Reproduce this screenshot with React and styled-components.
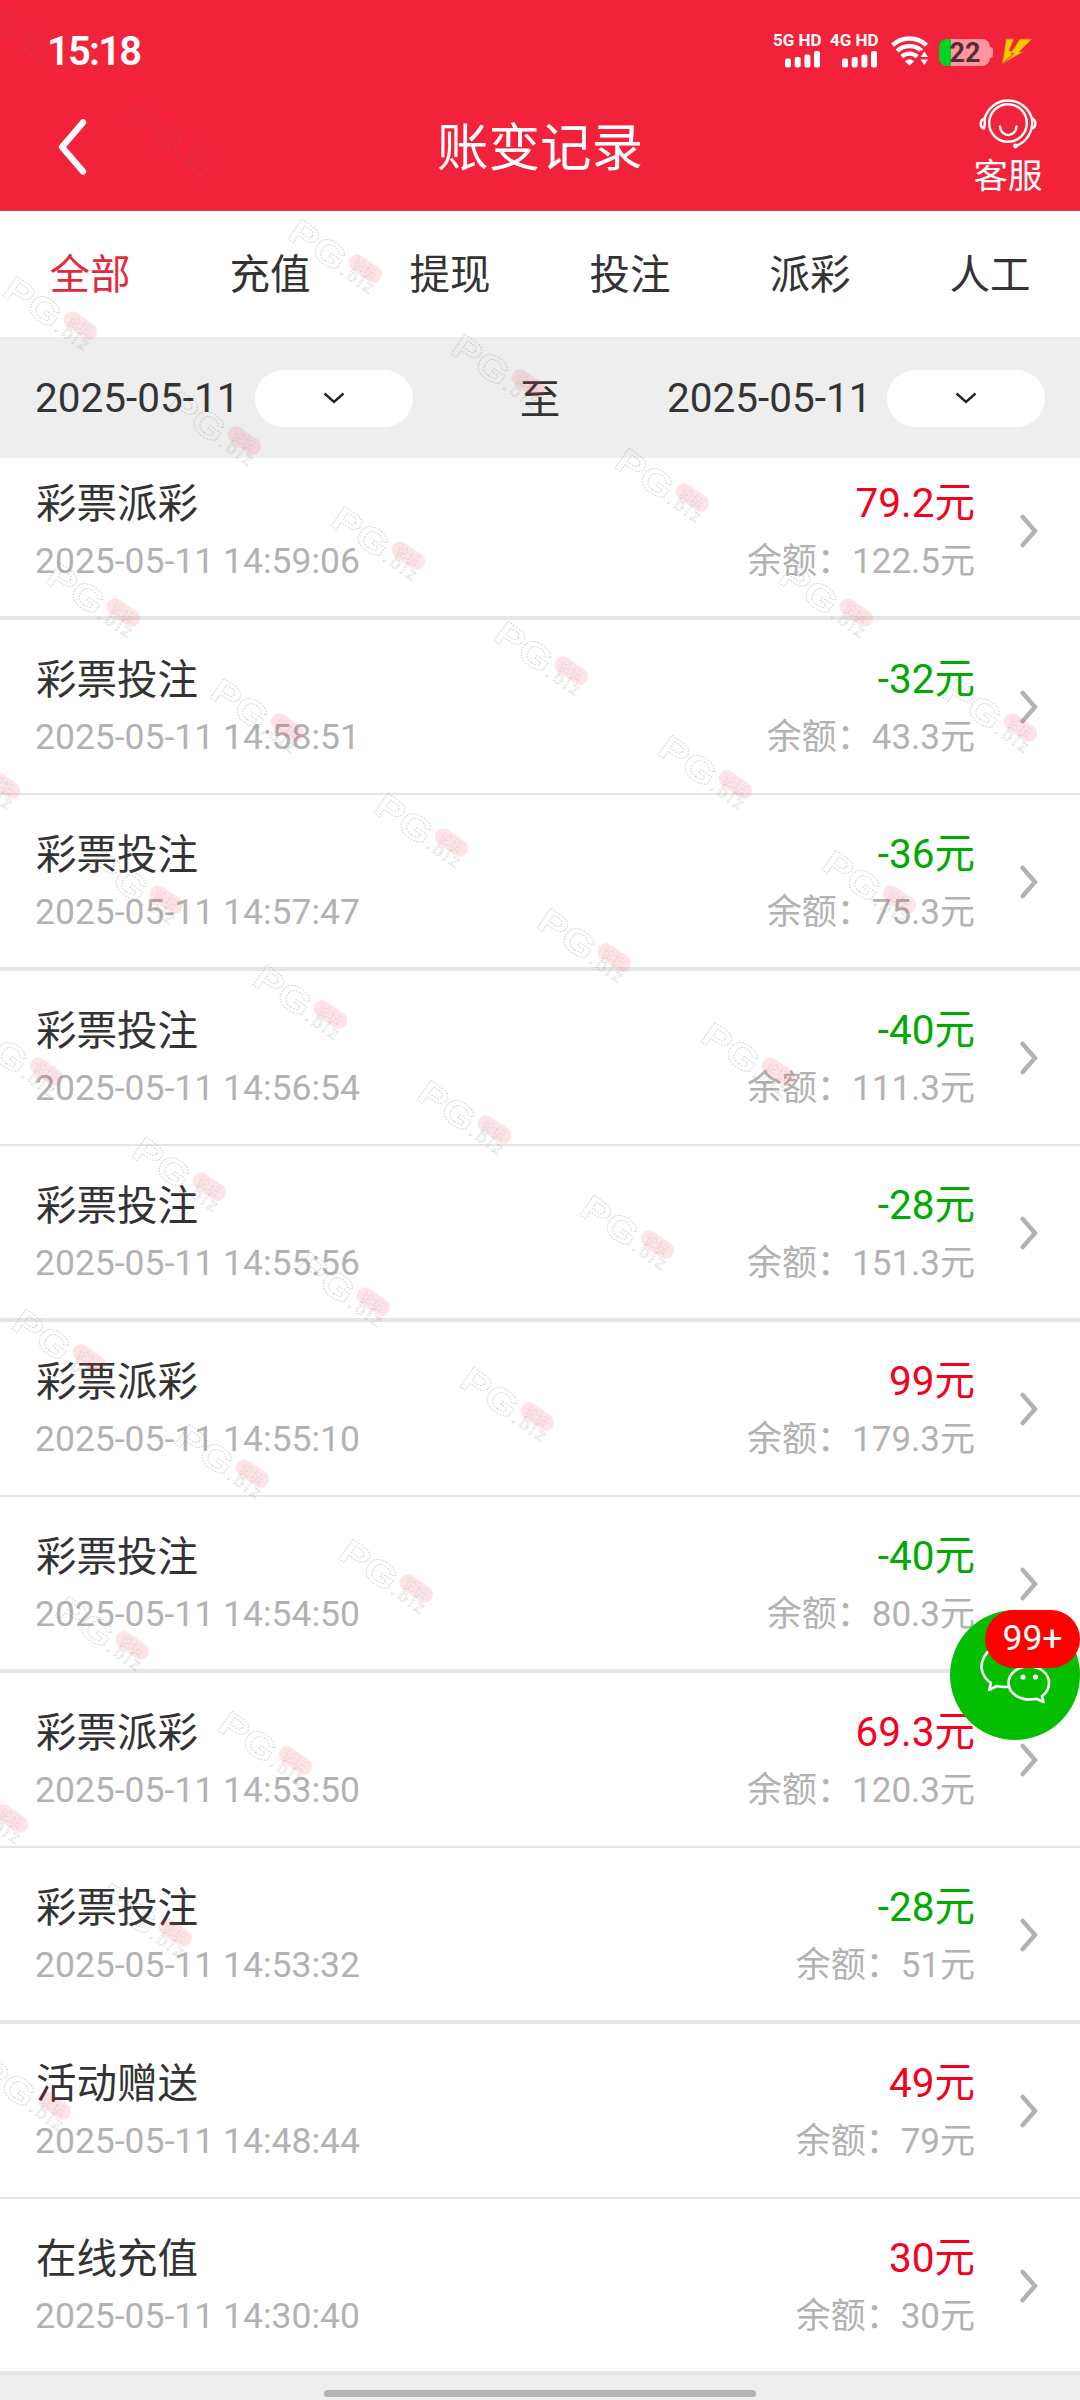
import styled, { createGlobalStyle } from "styled-components";

const tabs = ["全部", "充值", "提现", "投注", "派彩", "人工"];

const records = [
  { type: "彩票派彩", time: "2025-05-11 14:59:06", amount: "79.2", balance: "122.5" },
  { type: "彩票投注", time: "2025-05-11 14:58:51", amount: "-32", balance: "43.3" },
  { type: "彩票投注", time: "2025-05-11 14:57:47", amount: "-36", balance: "75.3" },
  { type: "彩票投注", time: "2025-05-11 14:56:54", amount: "-40", balance: "111.3" },
  { type: "彩票投注", time: "2025-05-11 14:55:56", amount: "-28", balance: "151.3" },
  { type: "彩票派彩", time: "2025-05-11 14:55:10", amount: "99", balance: "179.3" },
  { type: "彩票投注", time: "2025-05-11 14:54:50", amount: "-40", balance: "80.3" },
  { type: "彩票派彩", time: "2025-05-11 14:53:50", amount: "69.3", balance: "120.3" },
  { type: "彩票投注", time: "2025-05-11 14:53:32", amount: "-28", balance: "51" },
  { type: "活动赠送", time: "2025-05-11 14:48:44", amount: "49", balance: "79" },
  { type: "在线充值", time: "2025-05-11 14:30:40", amount: "30", balance: "30" },
];

// The watermark is repeated on a slanted grid, [first, last] column per row
const watermarkRows = [
  [-1, 5],
  [0, 5],
  [1, 5],
  [1, 5],
  [2, 5],
  [3, 5],
  [4, 5],
  [4, 5],
  [5, 5],
];

const watermarks = watermarkRows.flatMap(([first, last], row) => {
  const marks = [];
  for (let col = first; col <= last; col++) {
    marks.push({
      left: 122 - row * 120.7 + col * 163.7,
      top: 104 + row * 172.2 + col * 114.8,
    });
  }
  return marks;
});

function Signal({ label }) {
  return (
    <SignalBox>
      <SignalLabel>{label}</SignalLabel>
      <svg width="36" height="17" viewBox="0 0 36 17" fill="#fff">
        <rect x="0" y="7.5" width="6" height="9" rx="2" />
        <rect x="9.7" y="6" width="6" height="10.5" rx="2" />
        <rect x="19.4" y="3.5" width="6" height="13" rx="2" />
        <rect x="29" y="0" width="6" height="16.5" rx="2" />
      </svg>
    </SignalBox>
  );
}

function StatusIcons() {
  return (
    <StatusRight>
      <Signal label="5G HD" />
      <Signal label="4G HD" />
      <Wifi width="38" height="30" viewBox="0 0 38 30">
        <g fill="none" stroke="#fff" strokeWidth="4.4">
          <path d="M1.5 9.2 A25 25 0 0 1 35.5 9.2" />
          <path d="M6.2 15 A18 18 0 0 1 30.8 15" />
          <path d="M10.8 20.6 A11.5 11.5 0 0 1 26.2 20.6" />
        </g>
        <path d="M18.5 29.5 L13.8 25.2 Q18.5 21.2 23.2 25.2 Z" fill="#fff" />
        <path d="M28.5 14.5 H38 V30 H28.5 Z" fill="#f3223b" />
        <path d="M33.3 15.5 L37 21 H29.6 Z M33.3 29 L37 23.5 H29.6 Z" fill="#fff" />
      </Wifi>
      <Battery>
        <BatteryBody>22</BatteryBody>
        <BatteryNub />
      </Battery>
      <Bolt width="32" height="27" viewBox="0 0 32 27">
        <path d="M5 1 H13 L8 13 H15 L1 26 L3 15 Z" />
        <path d="M19 1 H31 L18 14 H22 L1 26 L13 15.5 H9.5 Z" />
      </Bolt>
    </StatusRight>
  );
}

function Watermark({ left, top }) {
  return (
    <Mark style={{ left, top }} width="110" height="90" viewBox="0 0 110 90">
      <g transform="translate(1.5 19.5) rotate(35)">
        <text
          x="-2"
          fontSize="35"
          fontWeight="700"
          textLength="62"
          lengthAdjust="spacingAndGlyphs"
          fill="none"
          stroke="#777"
          strokeOpacity="0.32"
          strokeWidth="1"
          strokeDasharray="1.6 1.1"
        >
          PG
        </text>
        <text
          x="62"
          y="-1"
          fontSize="18"
          textLength="37"
          fill="none"
          stroke="#777"
          strokeOpacity="0.27"
          strokeWidth="0.9"
          strokeDasharray="2 1"
        >
          .biz
        </text>
        <rect x="62.5" y="-28.5" width="37" height="17" rx="8.5" fill="#f0323c" fillOpacity="0.13" />
        <text x="67.5" y="-15" fontSize="13" fill="#777" fillOpacity="0.15">
          论坛
        </text>
      </g>
    </Mark>
  );
}

export default function App() {
  return (
    <Page>
      <GlobalStyle />
      <Header>
        <StatusBar>
          <Clock>15:18</Clock>
          <StatusIcons />
        </StatusBar>
        <NavBar>
          <NavButton>
            <svg width="30" height="58" viewBox="0 0 30 58">
              <path
                d="M26 4.5 L5 29 L26 53.5"
                fill="none"
                stroke="#fff"
                strokeWidth="6.4"
                strokeLinecap="round"
                strokeLinejoin="round"
              />
            </svg>
          </NavButton>
          <Title>账变记录</Title>
          <Service>
            <svg width="60" height="54" viewBox="0 0 60 54" fill="none" stroke="#fff" strokeWidth="2.4">
              <circle cx="30" cy="27" r="18.8" />
              <path d="M22 30.5 C23 42 37.5 42 38.5 30.5" strokeLinecap="round" />
              <path d="M6.5 23 A24.5 24.5 0 0 1 54 23 C55.5 35 49 46 37 50.5" />
              <path d="M6.5 22.5 C1.5 24 1.5 31 6 32.5 C7.2 29 7 26 6.5 22.5 Z" />
              <path d="M54 22.5 C58.5 24 58.5 31 54 32.5" />
              <circle cx="37.5" cy="50" r="2.4" fill="#fff" stroke="none" />
            </svg>
            <ServiceLabel>客服</ServiceLabel>
          </Service>
        </NavBar>
      </Header>

      <Tabs>
        {tabs.map((tab, i) => (
          <Tab key={tab} $active={i === 0}>
            {tab}
          </Tab>
        ))}
      </Tabs>

      <Filter>
        <DateField date="2025-05-11" />
        <Until>至</Until>
        <DateField date="2025-05-11" />
      </Filter>

      <List>
        {records.map((record, i) => (
          <Row key={record.time} $thick={i % 2 === 0}>
            <Info>
              <Name>{record.type}</Name>
              <Sub>{record.time}</Sub>
            </Info>
            <Info $right>
              <Amount $negative={record.amount.startsWith("-")}>{record.amount}元</Amount>
              <Balance>余额：{record.balance}元</Balance>
            </Info>
            <Arrow width="20" height="36" viewBox="0 0 20 36">
              <path d="M3.5 3.8 L16 18 L3.5 32.2" />
            </Arrow>
          </Row>
        ))}
      </List>

      <HomeArea>
        <HomeBar />
      </HomeArea>

      <ChatButton>
        <ChatIcon width="130" height="130" viewBox="0 0 130 130">
          <path d="M60 76.5 C54 77.5 50 77 47 76 L39 80 L41 73 C32 67 29 57 34 47 C40 36 58 30 72 38" />
          <path d="M79 56.5 C91 56.5 99 64 99 73 C99 79 96.5 83 92 86 L93.5 92 L86.5 88.8 C70 92 58.5 83 58.5 73 C58.5 64 67 56.5 79 56.5 Z" />
          <circle cx="73" cy="67" r="2.6" />
          <circle cx="85.5" cy="67" r="2.6" />
        </ChatIcon>
        <Badge>99+</Badge>
      </ChatButton>

      <WatermarkLayer>
        {watermarks.map((mark) => (
          <Watermark key={`${mark.left}-${mark.top}`} {...mark} />
        ))}
      </WatermarkLayer>
    </Page>
  );
}

function DateField({ date }) {
  return (
    <DateGroup>
      {date}
      <Picker>
        <svg width="24" height="14" viewBox="0 0 24 14">
          <path d="M2.5 2.5 L12 11 L21.5 2.5" fill="none" stroke="#222" strokeWidth="2.4" />
        </svg>
      </Picker>
    </DateGroup>
  );
}

const GlobalStyle = createGlobalStyle`
  * {
    box-sizing: border-box;
  }

  body {
    margin: 0;
    background-color: #eee;
    color: #333;
    font-family: Roboto, "Noto Sans CJK SC", sans-serif;
  }

  svg {
    display: block;
    flex-shrink: 0;
  }
`;

const Page = styled.div`
  position: relative;
  width: 1080px;
  height: 2400px;
  overflow: hidden;
  display: flex;
  flex-direction: column;
`;

const Header = styled.header`
  height: 211px;
  background-color: #f3223b;
  border-bottom: 1px solid #d93a4c;
  color: white;
`;

const StatusBar = styled.div`
  height: 84px;
  padding: 0 47px;
  display: flex;
  justify-content: space-between;
`;

const Clock = styled.div`
  padding-top: 32px;
  font-size: 40px;
  line-height: 40px;
  font-weight: 600;
  letter-spacing: -1.8px;
`;

const StatusRight = styled.div`
  display: flex;
  align-items: flex-start;
  padding-top: 33px;
`;

const SignalBox = styled.div`
  width: 57px;
  display: flex;
  flex-direction: column;
  align-items: flex-start;

  svg {
    margin: 3px 0 0 12px;
  }
`;

const SignalLabel = styled.div`
  font-size: 17px;
  line-height: 15px;
  font-weight: 700;
  white-space: nowrap;
`;

const Wifi = styled.svg`
  margin: 3px 0 0 4px;
`;

const Battery = styled.div`
  margin: 6px 0 0 10px;
  display: flex;
  align-items: center;
`;

const BatteryBody = styled.div`
  width: 51px;
  height: 27px;
  padding-left: 1px;
  border-radius: 8px;
  background: linear-gradient(to right, #00d322 12px, #ff959f 12px);
  color: #582c33;
  font-size: 27px;
  line-height: 28px;
  font-weight: 700;
  text-align: center;
`;

const BatteryNub = styled.div`
  width: 3px;
  height: 11px;
  border-radius: 0 3px 3px 0;
  background-color: #ff959f;
`;

const Bolt = styled.svg`
  margin: 5px 0 0 8px;
  fill: #ffc400;
  stroke: #d9661c;
  stroke-width: 0.9;
`;

const NavBar = styled.div`
  height: 126px;
  display: grid;
  grid-template-columns: 144px 1fr 144px;
  align-items: center;
`;

const NavButton = styled.div`
  padding-left: 57px;
`;

const Title = styled.h1`
  margin: 0;
  padding-top: 4px;
  font-size: 51.5px;
  line-height: 60px;
  font-weight: 400;
  text-align: center;
`;

const Service = styled.div`
  display: flex;
  flex-direction: column;
  align-items: center;
`;

const ServiceLabel = styled.div`
  height: 48px;
  font-size: 34.5px;
  line-height: 52px;
`;

const Tabs = styled.nav`
  height: 126px;
  padding-bottom: 5px;
  display: grid;
  grid-template-columns: repeat(6, 1fr);
  align-items: center;
  background-color: white;
`;

const Tab = styled.div`
  font-size: 40.5px;
  text-align: center;
  color: ${({ $active }) => ($active ? "#e12a3c" : "#333")};
`;

const Filter = styled.div`
  height: 121px;
  padding: 1px 35px 0;
  display: flex;
  align-items: center;
  justify-content: space-between;
  background-color: #eee;
  font-size: 40.5px;
`;

const Until = styled.span`
  padding-bottom: 4px;
`;

const DateGroup = styled.div`
  display: flex;
  align-items: center;
  justify-content: space-between;
  width: 378px;
`;

const Picker = styled.div`
  width: 158px;
  height: 57px;
  border-radius: 29px;
  background-color: white;
  display: flex;
  align-items: center;
  justify-content: center;
`;

/* scrolled a little, so the first row starts under the filter bar */
const List = styled.div`
  height: 1917px;
  overflow: hidden;
  display: flex;
  flex-direction: column;
  justify-content: flex-end;
`;

const Row = styled.div`
  flex: none;
  height: ${({ $thick }) => ($thick ? 176 : 175)}px;
  padding: 32px 35px 0;
  display: flex;
  background-color: white;
  border-bottom: ${({ $thick }) => ($thick ? 4 : 2)}px solid #e6e6e6;
`;

const Info = styled.div`
  flex: 1;
  text-align: ${({ $right }) => ($right ? "right" : "left")};
`;

const Name = styled.div`
  padding-left: 1px;
  font-size: 40.5px;
  line-height: 56px;
`;

const Amount = styled(Name)`
  line-height: 55px;
  color: ${({ $negative }) => ($negative ? "#0a0" : "#f5001d")};
`;

const Sub = styled.div`
  font-size: 35.5px;
  line-height: 58px;
  color: #b2b2b2;
`;

const Balance = styled(Sub)`
  padding-top: 2px;
  font-size: 35px;
`;

const Arrow = styled.svg`
  margin: 37px 6px 0 44px;
  fill: none;
  stroke: #b2b2b2;
  stroke-width: 4.4;
  stroke-linecap: round;
`;

const HomeArea = styled.div`
  flex: 1;
  padding-top: 15px;
  background-color: #eee;
`;

const HomeBar = styled.div`
  width: 432px;
  height: 7px;
  margin: 0 auto;
  border-radius: 4px;
  background-color: #b3b3b3;
`;

const ChatButton = styled.div`
  position: absolute;
  top: 1610px;
  right: 0;
  width: 130px;
  height: 130px;
  border-radius: 50%;
  background-color: #04be02;
`;

const ChatIcon = styled.svg`
  fill: none;
  stroke: white;
  stroke-width: 2.6;
  stroke-linejoin: round;

  circle {
    fill: white;
    stroke: none;
  }
`;

const Badge = styled.div`
  position: absolute;
  top: 0;
  right: 0;
  width: 95px;
  height: 58px;
  border-radius: 29px;
  background-color: #f00;
  color: white;
  font-size: 35.5px;
  line-height: 57px;
  text-align: center;
`;

const WatermarkLayer = styled.div`
  position: absolute;
  inset: 0;
  overflow: hidden;
  pointer-events: none;
`;

const Mark = styled.svg`
  position: absolute;
  overflow: visible;
  font-family: "Liberation Sans", "Noto Sans CJK SC", sans-serif;
`;
